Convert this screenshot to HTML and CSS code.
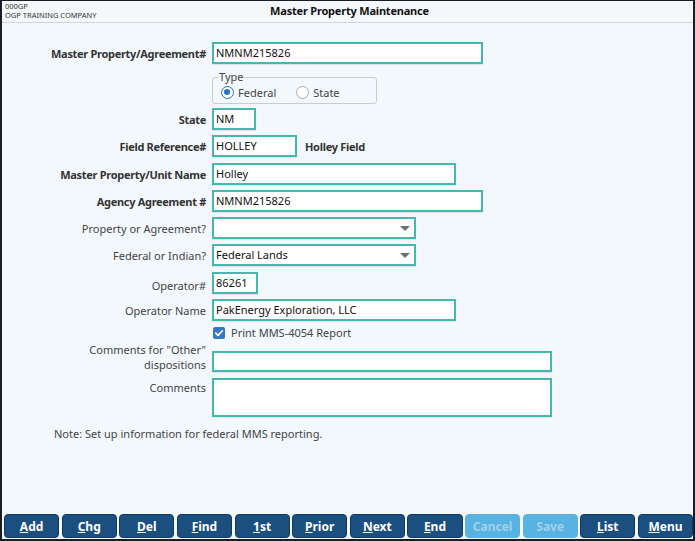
FILE: index.html
```html
<!DOCTYPE html>
<html>
<head>
<meta charset="utf-8">
<link rel="stylesheet" href="styles.css">
</head>
<body>
<div class="window">
  <header class="header">
    <div class="company">
      <div class="code">000GP</div>
      <div class="name">OGP TRAINING COMPANY</div>
    </div>
    <div class="title">Master Property Maintenance</div>
  </header>
  <main class="form">
    <div class="row r-first">
      <label class="lbl bold">Master Property/Agreement#</label>
      <div class="input w-long">NMNM215826</div>
    </div>
    <div class="row r-group">
      <div class="lbl"></div>
      <div class="group">
        <span class="legend">Type</span>
        <span class="radio checked"><span class="dot"></span>Federal</span>
        <span class="radio"><span class="dot"></span>State</span>
      </div>
    </div>
    <div class="row r-state">
      <label class="lbl bold">State</label>
      <div class="input w-state">NM</div>
    </div>
    <div class="row r-field">
      <label class="lbl bold">Field Reference#</label>
      <div class="input w-field">HOLLEY</div>
      <span class="side">Holley Field</span>
    </div>
    <div class="row r-unit">
      <label class="lbl bold">Master Property/Unit Name</label>
      <div class="input w-name">Holley</div>
    </div>
    <div class="row r-agency">
      <label class="lbl bold">Agency Agreement #</label>
      <div class="input w-long">NMNM215826</div>
    </div>
    <div class="row r-prop">
      <label class="lbl">Property or Agreement?</label>
      <div class="input select w-select"><span></span><span class="caret"></span></div>
    </div>
    <div class="row r-fed">
      <label class="lbl">Federal or Indian?</label>
      <div class="input select w-select"><span>Federal Lands</span><span class="caret"></span></div>
    </div>
    <div class="row r-op">
      <label class="lbl lbl-low">Operator#</label>
      <div class="input w-op">86261</div>
    </div>
    <div class="row r-opname">
      <label class="lbl">Operator Name</label>
      <div class="input w-name">PakEnergy Exploration, LLC</div>
    </div>
    <div class="row r-check">
      <div class="lbl"></div>
      <span class="check"><span class="box"><svg width="12" height="12" viewBox="0 0 12 12"><path d="M2.8 6.2 L5 8.4 L9.3 3.8" fill="none" stroke="#fff" stroke-width="1.7" stroke-linecap="round" stroke-linejoin="round"/></svg></span>Print MMS-4054 Report</span>
    </div>
    <div class="row r-other">
      <label class="lbl two">Comments for "Other"<br>dispositions</label>
      <div class="input w-comm h-other"></div>
    </div>
    <div class="row r-comm">
      <label class="lbl top">Comments</label>
      <div class="input w-comm h-comm"></div>
    </div>
    <p class="note">Note: Set up information for federal MMS reporting.</p>
  </main>
  <footer class="toolbar">
    <button class="btn"><u>A</u>dd</button>
    <button class="btn"><u>C</u>hg</button>
    <button class="btn"><u>D</u>el</button>
    <button class="btn"><u>F</u>ind</button>
    <button class="btn"><u>1</u>st</button>
    <button class="btn"><u>P</u>rior</button>
    <button class="btn"><u>N</u>ext</button>
    <button class="btn"><u>E</u>nd</button>
    <button class="btn off">Cancel</button>
    <button class="btn off">Save</button>
    <button class="btn"><u>L</u>ist</button>
    <button class="btn"><u>M</u>enu</button>
  </footer>
</div>
</body>
</html>
```
FILE: styles.css
```css
* { box-sizing: border-box; }
html, body { margin: 0; padding: 0; }
body {
  width: 695px;
  height: 541px;
  font-family: "Noto Sans", "Open Sans", sans-serif;
  color: #222;
  background: #1f2430;
}
.window {
  width: 695px;
  height: 541px;
  border: 2px solid #1a1d26;
  border-top-width: 1px;
  background: #f3f8fd;
  display: flex;
  flex-direction: column;
}
.header {
  height: 22px;
  border-bottom: 1px solid #d2d6da;
  background: #f4f8fb;
  display: flex;
  position: relative;
}
.company {
  padding: 1px 0 0 3px;
  font-size: 7.5px;
  line-height: 9px;
  color: #333;
  width: 200px;
}
.title {
  position: absolute;
  left: 0;
  right: 0;
  top: 2px;
  text-align: center;
  font-weight: bold;
  font-size: 11px;
  letter-spacing: -0.2px;
  color: #111;
  padding-left: 4px;
}
.form {
  flex: 1;
  display: flex;
  flex-direction: column;
  padding-top: 19px;
  font-size: 11px;
}
.row {
  display: flex;
  align-items: center;
  margin-bottom: 5px;
}
.lbl {
  width: 210px;
  flex: none;
  text-align: right;
  padding-right: 6px;
  color: #444;
  font-size: 11px;
}
.lbl.bold {
  font-weight: bold;
  color: #333;
  letter-spacing: -0.3px;
}
.input {
  height: 22px;
  border: 2px solid #45b7ae;
  background: #fff;
  font-size: 11px;
  line-height: 18px;
  padding: 0 2px;
  color: #111;
  box-shadow: 0 1px 1px rgba(0,0,0,0.08);
}
.w-long { width: 271px; }
.w-state { width: 44px; }
.w-field { width: 85px; }
.w-name { width: 244px; }
.w-select { width: 204px; }
.w-op { width: 46px; }
.w-comm { width: 340px; }
.h-other { height: 21px; margin-top: 5px; }
.h-comm { height: 39px; }
.select {
  display: flex;
  justify-content: space-between;
  align-items: center;
}
.caret {
  width: 0;
  height: 0;
  border-left: 5px solid transparent;
  border-right: 5px solid transparent;
  border-top: 5px solid #707070;
  margin-right: 2px;
}
.side {
  margin-left: 8px;
  font-size: 11px;
  color: #333;
  font-weight: bold;
  letter-spacing: -0.3px;
}
.r-first { margin-bottom: 13px; }
.r-group { margin-bottom: 4px; align-items: flex-start; }
.group {
  position: relative;
  width: 165px;
  height: 27px;
  border: 1px solid #c9cdd2;
  border-radius: 3px;
  padding: 8px 0 0 8px;
  display: flex;
  align-items: flex-start;
  gap: 20px;
}
.legend {
  position: absolute;
  left: 5px;
  top: -8px;
  font-size: 11px;
  line-height: 14px;
  color: #444;
  padding: 0 1px;
  background: #f3f8fd;
}
.radio {
  display: inline-flex;
  align-items: center;
  font-size: 11px;
  line-height: 13px;
  color: #444;
}
.dot {
  width: 13px;
  height: 13px;
  border-radius: 50%;
  border: 1px solid #aaa;
  background: #fff;
  margin-right: 4px;
  position: relative;
}
.checked .dot { border: 1.5px solid #2a72c4; }
.checked .dot::after {
  content: "";
  position: absolute;
  left: 2px;
  top: 2px;
  width: 6px;
  height: 6px;
  border-radius: 50%;
  background: #2a72c4;
}
.r-field { margin-bottom: 6px; }
.r-fed { margin-bottom: 6px; }
.lbl-low { padding-top: 4px; }
.r-check { margin-bottom: 4px; height: 13px; }
.check {
  display: inline-flex;
  align-items: center;
  font-size: 11px;
  color: #444;
  margin-left: 1px;
}
.box {
  width: 12px;
  height: 12px;
  border-radius: 2px;
  background: #3877c4;
  margin-right: 6px;
  display: inline-flex;
}
.r-other { align-items: flex-start; margin-top: 3px; margin-bottom: 6px; }
.lbl.two { line-height: 15px; margin-top: -4px; }
.r-comm { align-items: flex-start; }
.lbl.top { margin-top: 2px; }
.note {
  margin: 4px 0 0 52px;
  font-size: 11px;
  color: #444;
}
.toolbar {
  height: 27px;
  display: flex;
  gap: 2.5px;
  padding: 0 0 1px 2px;
  align-items: flex-end;
}
.btn {
  flex: 1;
  height: 24px;
  border: 1px solid #103a63;
  border-radius: 4px;
  background: #1b4f80;
  color: #fff;
  font-family: "Noto Sans", "Open Sans", sans-serif;
  font-weight: bold;
  font-size: 12px;
  padding: 0;
}
.btn.off {
  background: #58b3e2;
  border-color: #58b3e2;
  color: #9fd2ec;
}
```
